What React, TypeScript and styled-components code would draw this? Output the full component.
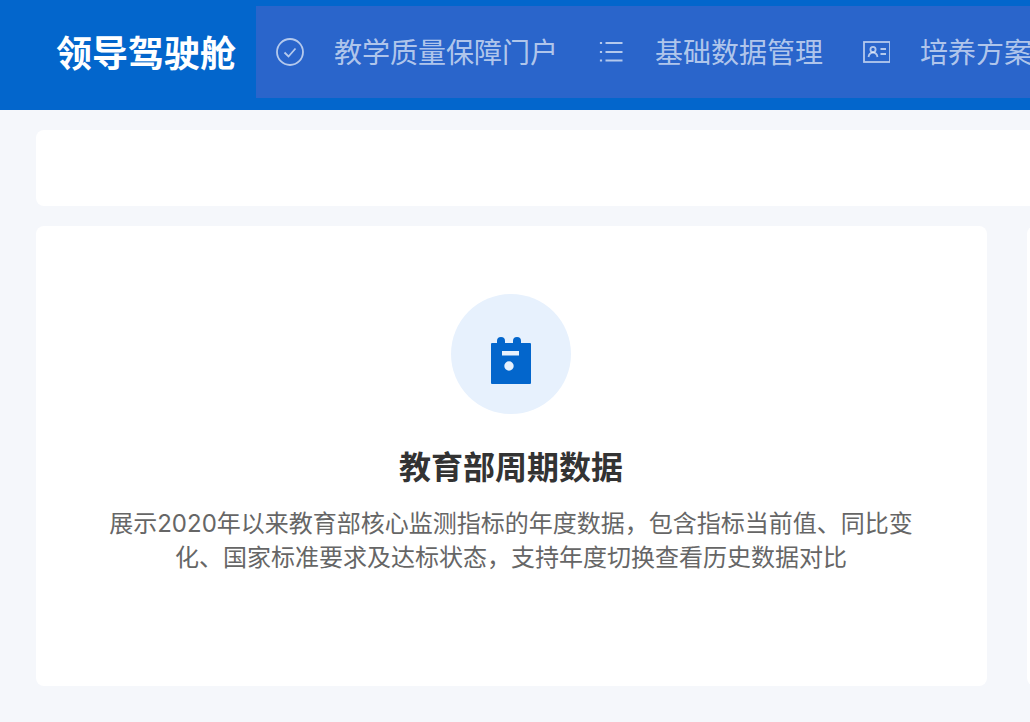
import React from "react";
import styled, { createGlobalStyle } from "styled-components";

const Global = createGlobalStyle`
  html, body { margin: 0; padding: 0; }
  body {
    width: 1030px; height: 722px; overflow: hidden; background: #f5f7fb;
    font-family: "Noto Sans CJK SC", "Liberation Sans", sans-serif;
  }
`;
const Page = styled.div`
  width: 1030px; height: 722px; overflow: hidden; background: #f5f7fb;
  display: flex; flex-direction: column;
`;
const Header = styled.header`
  height: 110px; flex: none; background: #0366cc; display: flex; padding: 6px 0 12px; box-sizing: border-box;
`;
const Logo = styled.div`
  width: 256px; flex: none; box-sizing: border-box; padding: 0 0 2px 56px; display: flex; align-items: center;
  color: #fff; font-size: 36px; font-weight: 700; white-space: nowrap; line-height: 1;
`;
const Nav = styled.nav`
  flex: 1; min-width: 0; background: #2a65cb; display: flex; align-items: center; padding-left: 20px; gap: 39px; overflow: hidden;
`;
const NavItem = styled.div`
  display: flex; align-items: center; gap: 30px; flex: none; color: rgba(255,255,255,0.65);
  font-size: 28px; line-height: 1; white-space: nowrap;
`;
const NavLabel = styled.span`
  display: block; margin-top: -2px;
`;
const NavIcon = styled.svg`
  width: 28px; height: 28px; flex: none; display: block; fill: none; stroke: currentColor; stroke-width: 1.8;
`;
const Main = styled.main`
  flex: 1; min-height: 0; padding: 20px 0 36px 36px; display: flex; flex-direction: column; gap: 20px;
`;
const TopCard = styled.div`
  height: 76px; flex: none; width: 1010px; background: #fff; border-radius: 8px;
`;
const Row = styled.div`
  flex: 1; min-height: 0; display: flex; gap: 40px; width: 1100px;
`;
const Card = styled.section`
  width: 951px; flex: none; background: #fff; border-radius: 8px; box-sizing: border-box; padding: 68px 73px 0 72px;
  display: flex; flex-direction: column; align-items: center;
`;
const NextCard = styled.div`
  flex: 1; background: #fff; border-radius: 8px;
`;
const Circle = styled.div`
  width: 120px; height: 120px; border-radius: 50%; background: #e7f1fd; display: flex; align-items: center; justify-content: center;
`;
const CalIcon = styled.svg`
  width: 40px; height: 48px; display: block; fill: #0366cc; margin-top: 14px;
`;
const Title = styled.h2`
  margin: 29px 0 0; font-size: 32px; line-height: 44px; font-weight: 700; color: #333;
`;
const Desc = styled.p`
  margin: 20px 0 0; font-family: Inter, "Noto Sans CJK SC", sans-serif; font-size: 24px; line-height: 33.6px; color: #666; text-align: center; font-weight: 400; width: 806px;
`;

export default function App() {
  return (
    <Page>
      <Global />
      <Header>
        <Logo>领导驾驶舱</Logo>
        <Nav>
          <NavItem>
            <NavIcon viewBox="0 0 28 28">
              <circle cx="14" cy="14" r="13" />
              <path d="M8.5 14.5l4 4 7-8" />
            </NavIcon>
            <NavLabel>教学质量保障门户</NavLabel>
          </NavItem>
          <NavItem>
            <NavIcon viewBox="0 0 28 28">
              <path d="M8.500 5h17M8.500 14h17M8.500 22.500h17" />
              <path d="M4 4v2M4 13v2M4 21.500v2" strokeWidth="2.2" />
            </NavIcon>
            <NavLabel>基础数据管理</NavLabel>
          </NavItem>
          <NavItem>
            <NavIcon viewBox="0 0 28 28">
              <rect x="2" y="4" width="26" height="20" />
              <circle cx="11" cy="11.500" r="2.600" />
              <path d="M6.500 19c.5-3 2.300-4.300 4.500-4.300s4 1.300 4.500 4.300M18.500 11h5.500M18.500 16h5.500" />
            </NavIcon>
            <NavLabel>培养方案</NavLabel>
          </NavItem>
        </Nav>
      </Header>
      <Main>
        <TopCard />
        <Row>
          <Card>
            <Circle>
              <CalIcon viewBox="0 0 40 48">
                <path fillRule="evenodd" d="M10 0a4 4 0 0 1 4 4v2h8V4a4 4 0 0 1 8 0v2h9a1 1 0 0 1 1 1v39a1 1 0 0 1-1 1H1a1 1 0 0 1-1-1V7a1 1 0 0 1 1-1h5V4a4 4 0 0 1 4-4zM11 14v4.500h17V14zM18 24.300a4.700 4.700 0 1 0 0 9.400 4.700 4.700 0 0 0 0-9.400z" />
              </CalIcon>
            </Circle>
            <Title>教育部周期数据</Title>
            <Desc>展示2020年以来教育部核心监测指标的年度数据，包含指标当前值、同比变化、国家标准要求及达标状态，支持年度切换查看历史数据对比</Desc>
          </Card>
          <NextCard />
        </Row>
      </Main>
    </Page>
  );
}
